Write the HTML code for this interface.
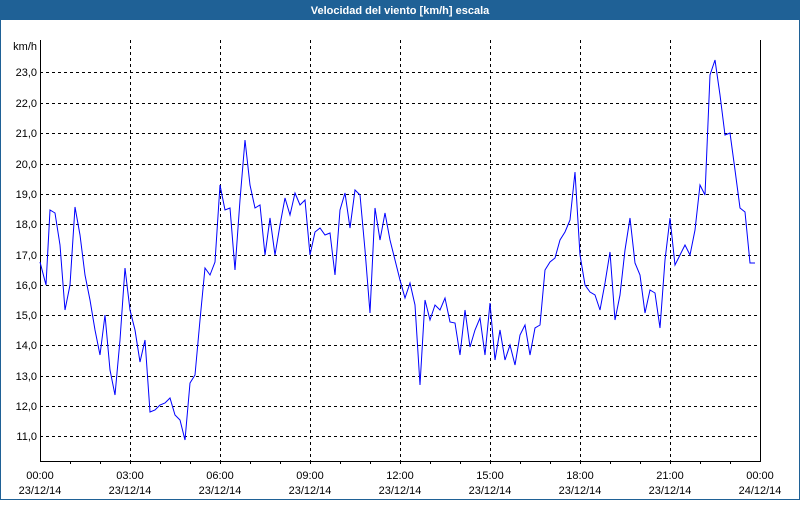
<!DOCTYPE html>
<html><head><style>
body{margin:0;width:800px;height:500px;overflow:hidden;background:#fff;font-family:"Liberation Sans","DejaVu Sans",sans-serif}
</style></head><body>
<svg width="800" height="500" xmlns="http://www.w3.org/2000/svg" font-family="Liberation Sans, DejaVu Sans, sans-serif" font-size="11">
<rect x="0" y="0" width="800" height="500" fill="#fff"/>
<rect x="0.5" y="0.5" width="799" height="499" fill="none" stroke="#1f6196"/>
<rect x="0" y="0" width="800" height="20" fill="#1f6196"/>
<text x="400" y="14" fill="#fff" font-weight="bold" text-anchor="middle">Velocidad del viento [km/h] escala</text>
<g stroke="#000" stroke-dasharray="3,3" stroke-width="1">
<line x1="130.5" y1="40" x2="130.5" y2="461"/><line x1="220.5" y1="40" x2="220.5" y2="461"/><line x1="310.5" y1="40" x2="310.5" y2="461"/><line x1="400.5" y1="40" x2="400.5" y2="461"/><line x1="490.5" y1="40" x2="490.5" y2="461"/><line x1="580.5" y1="40" x2="580.5" y2="461"/><line x1="670.5" y1="40" x2="670.5" y2="461"/>
<line x1="40" y1="72.5" x2="760" y2="72.5"/><line x1="40" y1="103.5" x2="760" y2="103.5"/><line x1="40" y1="133.5" x2="760" y2="133.5"/><line x1="40" y1="164.5" x2="760" y2="164.5"/><line x1="40" y1="194.5" x2="760" y2="194.5"/><line x1="40" y1="224.5" x2="760" y2="224.5"/><line x1="40" y1="255.5" x2="760" y2="255.5"/><line x1="40" y1="285.5" x2="760" y2="285.5"/><line x1="40" y1="315.5" x2="760" y2="315.5"/><line x1="40" y1="345.5" x2="760" y2="345.5"/><line x1="40" y1="376.5" x2="760" y2="376.5"/><line x1="40" y1="406.5" x2="760" y2="406.5"/><line x1="40" y1="436.5" x2="760" y2="436.5"/>
</g>
<path d="M40.5 40V461.5H760.5V40" fill="none" stroke="#000"/>
<g stroke="#000"><path d="M70.5 461v3M100.5 461v3M130.5 461v3M160.5 461v3M190.5 461v3M220.5 461v3M250.5 461v3M280.5 461v3M310.5 461v3M340.5 461v3M370.5 461v3M400.5 461v3M430.5 461v3M460.5 461v3M490.5 461v3M520.5 461v3M550.5 461v3M580.5 461v3M610.5 461v3M640.5 461v3M670.5 461v3M700.5 461v3M730.5 461v3"/></g>
<g fill="#000" text-anchor="end">
<text x="37" y="50">km/h</text>
<text x="37" y="76">23,0</text><text x="37" y="107">22,0</text><text x="37" y="137">21,0</text><text x="37" y="168">20,0</text><text x="37" y="198">19,0</text><text x="37" y="228">18,0</text><text x="37" y="259">17,0</text><text x="37" y="289">16,0</text><text x="37" y="319">15,0</text><text x="37" y="349">14,0</text><text x="37" y="380">13,0</text><text x="37" y="410">12,0</text><text x="37" y="440">11,0</text>
</g>
<g fill="#000" text-anchor="middle">
<text x="40" y="479">00:00</text><text x="40" y="494">23/12/14</text>
<text x="130" y="479">03:00</text><text x="130" y="494">23/12/14</text>
<text x="220" y="479">06:00</text><text x="220" y="494">23/12/14</text>
<text x="310" y="479">09:00</text><text x="310" y="494">23/12/14</text>
<text x="400" y="479">12:00</text><text x="400" y="494">23/12/14</text>
<text x="490" y="479">15:00</text><text x="490" y="494">23/12/14</text>
<text x="580" y="479">18:00</text><text x="580" y="494">23/12/14</text>
<text x="670" y="479">21:00</text><text x="670" y="494">23/12/14</text>
<text x="760" y="479">00:00</text><text x="760" y="494">24/12/14</text>
</g>
<polyline fill="none" stroke="#0000ff" stroke-width="1" points="40,262 46,285 50,210 55,213 60,245 65,310 70,285 75,207 80,235 85,275 90,300 95,330 100,355 105,315 110,370 115,395 120,340 125,268 130,310 135,330 140,362 145,340 150,412 155,410 160,405 165,403 170,398 175,415 180,420 185,440 190,383 195,375 200,320 205,268 210,275 215,262 220,185 225,210 230,208 235,270 240,200 245,140 250,185 255,208 260,205 265,255 270,218 275,255 280,225 285,198 290,215 295,193 300,205 305,200 310,255 315,232 320,228 325,235 330,233 335,275 340,210 345,193 350,228 355,190 360,195 365,250 370,313 375,208 380,240 385,213 390,240 395,260 400,280 405,298 410,283 415,305 420,385 425,300 430,320 435,305 440,310 445,298 450,322 455,323 460,355 465,310 470,347 475,330 480,318 485,355 490,303 495,360 500,330 505,360 510,345 515,365 520,335 525,325 530,355 535,328 540,325 545,270 550,262 555,258 560,240 565,232 570,220 575,172 580,255 585,285 590,292 595,295 600,310 605,283 610,252 615,320 620,295 625,250 630,218 635,263 640,275 645,313 650,290 655,293 660,328 665,260 670,218 675,265 680,255 685,245 690,255 695,230 700,185 705,195 710,75 715,60 720,95 725,135 730,133 735,170 740,208 745,212 750,263 755,263"/>
</svg>
</body></html>
